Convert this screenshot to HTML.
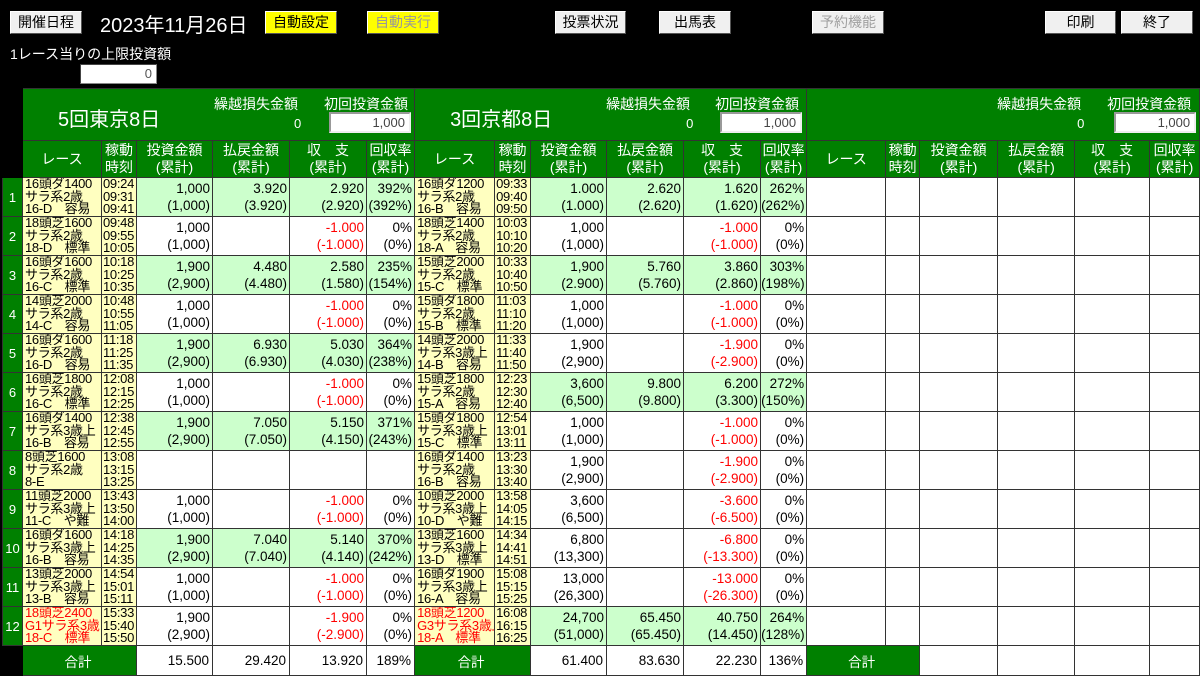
<!DOCTYPE html>
<html><head><meta charset="utf-8"><style>
*{margin:0;padding:0;box-sizing:border-box}
body{width:1200px;height:675px;background:#000;overflow:hidden;position:relative;font-family:"Liberation Sans","Noto Sans CJK JP",sans-serif;color:#000}
.btn{position:absolute;top:11px;height:23px;background:#f0f0f0;border:1px solid #fff;border-right-color:#555;border-bottom-color:#555;font-size:14px;text-align:center;line-height:21px}
.yel{background:#ffff00}
.dis{color:#a0a0a0}
.lbl{position:absolute;color:#fff}
.inp{position:absolute;background:#fff;border:1px solid #888;border-top-color:#444;border-left-color:#444;text-align:right;font-size:13px;padding-right:4px;color:#555}
table{position:absolute;left:2px;top:88px;border-collapse:collapse;table-layout:fixed;width:1198px}
td{border:1px solid #333;overflow:hidden;white-space:nowrap;background:#fff}
tr.d td{height:39px}
td.n{background:#008000;color:#fff;font-size:13px;text-align:center}
td.blk,tr.h td.blk,tr.tot td.blk{background:#000;border-color:#000}
td.ttl{background:#008000;height:52px;position:relative;color:#fff}
.ttl .nm{position:absolute;left:35px;top:14px;font-size:20px}
.ttl .a{position:absolute;top:5px;font-size:14px}
.ttl .z{position:absolute;top:27px;font-size:13px}
.ttl .ib{position:absolute;top:23px;width:82px;height:21px;background:#fff;border:2px solid #999;border-bottom-color:#eee;border-right-color:#eee;color:#444;font-size:13px;text-align:right;padding-right:4px;line-height:17px}
tr.h td{background:#008000;color:#fff;font-size:14px;text-align:center;line-height:17px;height:37px}
td.r{background:#ffffc0;font-size:13px;line-height:12.4px;padding-left:2px;vertical-align:middle;letter-spacing:-0.3px}
td.t{background:#ffffc0;font-size:13px;line-height:12.4px;padding-left:1px;letter-spacing:-0.3px}
td.red{color:#f00}
td.v{font-size:13.5px;text-align:right;line-height:17px;padding-right:2px}
td.g{background:#ccffcc}
td.ng{color:#f00}
tr.tot td{height:30px;font-size:13.5px;text-align:right;padding-right:3px}
tr.tot td.gt{background:#008000;color:#fff;text-align:center}
</style></head><body>
<div class="btn" style="left:10px;width:72px">開催日程</div>
<div class="lbl" style="left:100px;top:9px;font-size:20px">2023年11月26日</div>
<div class="btn yel" style="left:265px;width:72px">自動設定</div>
<div class="btn yel" style="left:367px;width:72px;color:#999">自動実行</div>
<div class="btn" style="left:555px;width:71px">投票状況</div>
<div class="btn" style="left:659px;width:72px">出馬表</div>
<div class="btn dis" style="left:812px;width:72px">予約機能</div>
<div class="btn" style="left:1045px;width:71px">印刷</div>
<div class="btn" style="left:1121px;width:72px">終了</div>
<div class="lbl" style="left:10px;top:44px;font-size:14px">1レース当りの上限投資額</div>
<div class="inp" style="left:80px;top:64px;width:77px;height:20px;line-height:18px">0</div>

<table>
<colgroup><col style="width:20px"><col style="width:79px"><col style="width:35px"><col style="width:76px"><col style="width:77px"><col style="width:77px"><col style="width:48px"><col style="width:80px"><col style="width:36px"><col style="width:76px"><col style="width:77px"><col style="width:77px"><col style="width:46px"><col style="width:79px"><col style="width:34px"><col style="width:78px"><col style="width:77px"><col style="width:75px"><col style="width:50px"></colgroup>
<tr><td class="blk"></td>
<td colspan="6" class="ttl"><span class="nm">5回東京8日</span><span class="a" style="left:191px">繰越損失金額</span><span class="z" style="left:271px">0</span><span class="a" style="left:301px">初回投資金額</span><div class="ib" style="left:306px">1,000</div></td>
<td colspan="6" class="ttl"><span class="nm">3回京都8日</span><span class="a" style="left:191px">繰越損失金額</span><span class="z" style="left:271px">0</span><span class="a" style="left:300px">初回投資金額</span><div class="ib" style="left:305px">1,000</div></td>
<td colspan="6" class="ttl"><span class="a" style="left:190px">繰越損失金額</span><span class="z" style="left:270px">0</span><span class="a" style="left:300px">初回投資金額</span><div class="ib" style="left:307px">1,000</div></td>
</tr>
<tr class="h"><td class="blk"></td>
<td>レース</td><td>稼動<br>時刻</td><td>投資金額<br>(累計)</td><td>払戻金額<br>(累計)</td><td>収　支<br>(累計)</td><td>回収率<br>(累計)</td>
<td>レース</td><td>稼動<br>時刻</td><td>投資金額<br>(累計)</td><td>払戻金額<br>(累計)</td><td>収　支<br>(累計)</td><td>回収率<br>(累計)</td>
<td>レース</td><td>稼動<br>時刻</td><td>投資金額<br>(累計)</td><td>払戻金額<br>(累計)</td><td>収　支<br>(累計)</td><td>回収率<br>(累計)</td></tr>

<tr class="d"><td class="n">1</td>
<td class="r">16頭ダ1400<br>サラ系2歳<br>16-D　容易</td><td class="t">09:24<br>09:31<br>09:41</td><td class="v g">1,000<br>(1,000)</td><td class="v g">3.920<br>(3.920)</td><td class="v g">2.920<br>(2.920)</td><td class="v g">392%<br>(392%)</td>
<td class="r">16頭ダ1200<br>サラ系2歳<br>16-B　容易</td><td class="t">09:33<br>09:40<br>09:50</td><td class="v g">1.000<br>(1.000)</td><td class="v g">2.620<br>(2.620)</td><td class="v g">1.620<br>(1.620)</td><td class="v g">262%<br>(262%)</td>
<td></td><td></td><td></td><td></td><td></td><td></td></tr>

<tr class="d"><td class="n">2</td>
<td class="r">18頭芝1600<br>サラ系2歳<br>18-D　標準</td><td class="t">09:48<br>09:55<br>10:05</td><td class="v">1,000<br>(1,000)</td><td class="v"></td><td class="v ng">-1.000<br>(-1.000)</td><td class="v">0%<br>(0%)</td>
<td class="r">18頭芝1400<br>サラ系2歳<br>18-A　容易</td><td class="t">10:03<br>10:10<br>10:20</td><td class="v">1,000<br>(1,000)</td><td class="v"></td><td class="v ng">-1.000<br>(-1.000)</td><td class="v">0%<br>(0%)</td>
<td></td><td></td><td></td><td></td><td></td><td></td></tr>

<tr class="d"><td class="n">3</td>
<td class="r">16頭ダ1600<br>サラ系2歳<br>16-C　標準</td><td class="t">10:18<br>10:25<br>10:35</td><td class="v g">1,900<br>(2,900)</td><td class="v g">4.480<br>(4.480)</td><td class="v g">2.580<br>(1.580)</td><td class="v g">235%<br>(154%)</td>
<td class="r">15頭芝2000<br>サラ系2歳<br>15-C　標準</td><td class="t">10:33<br>10:40<br>10:50</td><td class="v g">1,900<br>(2.900)</td><td class="v g">5.760<br>(5.760)</td><td class="v g">3.860<br>(2.860)</td><td class="v g">303%<br>(198%)</td>
<td></td><td></td><td></td><td></td><td></td><td></td></tr>

<tr class="d"><td class="n">4</td>
<td class="r">14頭芝2000<br>サラ系2歳<br>14-C　容易</td><td class="t">10:48<br>10:55<br>11:05</td><td class="v">1,000<br>(1,000)</td><td class="v"></td><td class="v ng">-1.000<br>(-1.000)</td><td class="v">0%<br>(0%)</td>
<td class="r">15頭ダ1800<br>サラ系2歳<br>15-B　標準</td><td class="t">11:03<br>11:10<br>11:20</td><td class="v">1,000<br>(1,000)</td><td class="v"></td><td class="v ng">-1.000<br>(-1.000)</td><td class="v">0%<br>(0%)</td>
<td></td><td></td><td></td><td></td><td></td><td></td></tr>

<tr class="d"><td class="n">5</td>
<td class="r">16頭ダ1600<br>サラ系2歳<br>16-D　容易</td><td class="t">11:18<br>11:25<br>11:35</td><td class="v g">1,900<br>(2,900)</td><td class="v g">6.930<br>(6.930)</td><td class="v g">5.030<br>(4.030)</td><td class="v g">364%<br>(238%)</td>
<td class="r">14頭芝2000<br>サラ系3歳上<br>14-B　容易</td><td class="t">11:33<br>11:40<br>11:50</td><td class="v">1,900<br>(2,900)</td><td class="v"></td><td class="v ng">-1.900<br>(-2.900)</td><td class="v">0%<br>(0%)</td>
<td></td><td></td><td></td><td></td><td></td><td></td></tr>

<tr class="d"><td class="n">6</td>
<td class="r">16頭芝1800<br>サラ系2歳<br>16-C　標準</td><td class="t">12:08<br>12:15<br>12:25</td><td class="v">1,000<br>(1,000)</td><td class="v"></td><td class="v ng">-1.000<br>(-1.000)</td><td class="v">0%<br>(0%)</td>
<td class="r">15頭芝1800<br>サラ系2歳<br>15-A　容易</td><td class="t">12:23<br>12:30<br>12:40</td><td class="v g">3,600<br>(6,500)</td><td class="v g">9.800<br>(9.800)</td><td class="v g">6.200<br>(3.300)</td><td class="v g">272%<br>(150%)</td>
<td></td><td></td><td></td><td></td><td></td><td></td></tr>

<tr class="d"><td class="n">7</td>
<td class="r">16頭ダ1400<br>サラ系3歳上<br>16-B　容易</td><td class="t">12:38<br>12:45<br>12:55</td><td class="v g">1,900<br>(2,900)</td><td class="v g">7.050<br>(7.050)</td><td class="v g">5.150<br>(4.150)</td><td class="v g">371%<br>(243%)</td>
<td class="r">15頭ダ1800<br>サラ系3歳上<br>15-C　標準</td><td class="t">12:54<br>13:01<br>13:11</td><td class="v">1,000<br>(1,000)</td><td class="v"></td><td class="v ng">-1.000<br>(-1.000)</td><td class="v">0%<br>(0%)</td>
<td></td><td></td><td></td><td></td><td></td><td></td></tr>

<tr class="d"><td class="n">8</td>
<td class="r">8頭芝1600<br>サラ系2歳<br>8-E</td><td class="t">13:08<br>13:15<br>13:25</td><td class="v"></td><td class="v"></td><td class="v"></td><td class="v"></td>
<td class="r">16頭ダ1400<br>サラ系2歳<br>16-B　容易</td><td class="t">13:23<br>13:30<br>13:40</td><td class="v">1,900<br>(2,900)</td><td class="v"></td><td class="v ng">-1.900<br>(-2.900)</td><td class="v">0%<br>(0%)</td>
<td></td><td></td><td></td><td></td><td></td><td></td></tr>

<tr class="d"><td class="n">9</td>
<td class="r">11頭芝2000<br>サラ系3歳上<br>11-C　や難</td><td class="t">13:43<br>13:50<br>14:00</td><td class="v">1,000<br>(1,000)</td><td class="v"></td><td class="v ng">-1.000<br>(-1.000)</td><td class="v">0%<br>(0%)</td>
<td class="r">10頭芝2000<br>サラ系3歳上<br>10-D　や難</td><td class="t">13:58<br>14:05<br>14:15</td><td class="v">3,600<br>(6,500)</td><td class="v"></td><td class="v ng">-3.600<br>(-6.500)</td><td class="v">0%<br>(0%)</td>
<td></td><td></td><td></td><td></td><td></td><td></td></tr>

<tr class="d"><td class="n">10</td>
<td class="r">16頭ダ1600<br>サラ系3歳上<br>16-B　容易</td><td class="t">14:18<br>14:25<br>14:35</td><td class="v g">1,900<br>(2,900)</td><td class="v g">7.040<br>(7.040)</td><td class="v g">5.140<br>(4.140)</td><td class="v g">370%<br>(242%)</td>
<td class="r">13頭芝1600<br>サラ系3歳上<br>13-D　標準</td><td class="t">14:34<br>14:41<br>14:51</td><td class="v">6,800<br>(13,300)</td><td class="v"></td><td class="v ng">-6.800<br>(-13.300)</td><td class="v">0%<br>(0%)</td>
<td></td><td></td><td></td><td></td><td></td><td></td></tr>

<tr class="d"><td class="n">11</td>
<td class="r">13頭芝2000<br>サラ系3歳上<br>13-B　容易</td><td class="t">14:54<br>15:01<br>15:11</td><td class="v">1,000<br>(1,000)</td><td class="v"></td><td class="v ng">-1.000<br>(-1.000)</td><td class="v">0%<br>(0%)</td>
<td class="r">16頭ダ1900<br>サラ系3歳上<br>16-A　容易</td><td class="t">15:08<br>15:15<br>15:25</td><td class="v">13,000<br>(26,300)</td><td class="v"></td><td class="v ng">-13.000<br>(-26.300)</td><td class="v">0%<br>(0%)</td>
<td></td><td></td><td></td><td></td><td></td><td></td></tr>

<tr class="d"><td class="n">12</td>
<td class="r red">18頭芝2400<br>G1サラ系3歳<br>18-C　標準</td><td class="t">15:33<br>15:40<br>15:50</td><td class="v">1,900<br>(2,900)</td><td class="v"></td><td class="v ng">-1.900<br>(-2.900)</td><td class="v">0%<br>(0%)</td>
<td class="r red">18頭芝1200<br>G3サラ系3歳上<br>18-A　標準</td><td class="t">16:08<br>16:15<br>16:25</td><td class="v g">24,700<br>(51,000)</td><td class="v g">65.450<br>(65.450)</td><td class="v g">40.750<br>(14.450)</td><td class="v g">264%<br>(128%)</td>
<td></td><td></td><td></td><td></td><td></td><td></td></tr>

<tr class="tot"><td class="blk"></td>
<td colspan="2" class="gt">合計</td><td>15.500</td><td>29.420</td><td>13.920</td><td>189%</td>
<td colspan="2" class="gt">合計</td><td>61.400</td><td>83.630</td><td>22.230</td><td>136%</td>
<td colspan="2" class="gt">合計</td><td></td><td></td><td></td><td></td></tr>
</table>
</body></html>
